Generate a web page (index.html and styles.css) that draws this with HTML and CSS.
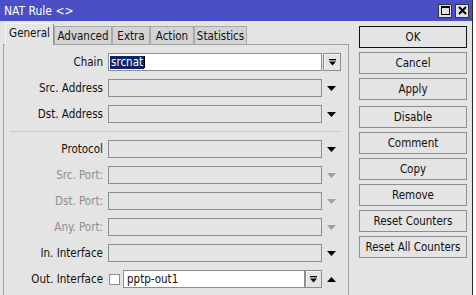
FILE: index.html
```html
<!DOCTYPE html>
<html>
<head>
<meta charset="utf-8">
<link rel="stylesheet" href="styles.css">
</head>
<body>
<div class="screen">
  <div class="window">
    <div class="titlebar">
      <span class="title">NAT Rule &lt;&gt;</span>
      <div class="tb-btns">
        <span class="tb-btn"><svg width="9" height="9" viewBox="0 0 9 9"><rect x="0.5" y="0.5" width="8" height="8" fill="none" stroke="#000" stroke-width="1"/><rect x="0" y="0" width="9" height="2" fill="#000"/></svg></span>
        <span class="tb-btn"><svg width="9" height="9" viewBox="0 0 9 9"><path d="M1 1 L8 8 M8 1 L1 8" stroke="#000" stroke-width="2"/></svg></span>
      </div>
    </div>
    <div class="body">
      <div class="left">
        <div class="tabs">
          <span class="tab active t-general">General</span>
          <span class="tab t-adv">Advanced</span>
          <span class="tab t-extra">Extra</span>
          <span class="tab t-action">Action</span>
          <span class="tab t-stats">Statistics</span>
        </div>
        <div class="panel">
          <div class="row">
            <span class="label">Chain</span>
            <span class="field input"><span class="sel">srcnat</span><span class="caret"></span></span>
            <span class="ddbtn"><svg width="7" height="7" viewBox="0 0 7 7"><rect x="0" y="0" width="7" height="1.3" fill="#000"/><polygon points="0,2.5 7,2.5 3.5,6.5" fill="#000"/></svg></span>
          </div>
          <div class="row">
            <span class="label">Src. Address</span>
            <span class="field"></span>
            <span class="arrow"><svg width="9" height="5" viewBox="0 0 9 5"><polygon points="0,0 9,0 4.5,5" fill="#000"/></svg></span>
          </div>
          <div class="row">
            <span class="label">Dst. Address</span>
            <span class="field"></span>
            <span class="arrow"><svg width="9" height="5" viewBox="0 0 9 5"><polygon points="0,0 9,0 4.5,5" fill="#000"/></svg></span>
          </div>
          <div class="sep"></div>
          <div class="row">
            <span class="label">Protocol</span>
            <span class="field"></span>
            <span class="arrow"><svg width="9" height="5" viewBox="0 0 9 5"><polygon points="0,0 9,0 4.5,5" fill="#000"/></svg></span>
          </div>
          <div class="row">
            <span class="label dis">Src. Port:</span>
            <span class="field"></span>
            <span class="arrow"><svg width="9" height="5" viewBox="0 0 9 5"><polygon points="0,0 9,0 4.5,5" fill="#a0a0a0"/></svg></span>
          </div>
          <div class="row">
            <span class="label dis">Dst. Port:</span>
            <span class="field"></span>
            <span class="arrow"><svg width="9" height="5" viewBox="0 0 9 5"><polygon points="0,0 9,0 4.5,5" fill="#a0a0a0"/></svg></span>
          </div>
          <div class="row">
            <span class="label dis">Any. Port:</span>
            <span class="field"></span>
            <span class="arrow"><svg width="9" height="5" viewBox="0 0 9 5"><polygon points="0,0 9,0 4.5,5" fill="#a0a0a0"/></svg></span>
          </div>
          <div class="row">
            <span class="label">In. Interface</span>
            <span class="field"></span>
            <span class="arrow"><svg width="9" height="5" viewBox="0 0 9 5"><polygon points="0,0 9,0 4.5,5" fill="#000"/></svg></span>
          </div>
          <div class="row">
            <span class="label">Out. Interface</span>
            <span class="combo">
              <span class="check"></span>
              <span class="cinput">pptp-out1</span>
              <span class="ddbtn small"><svg width="7" height="7" viewBox="0 0 7 7"><rect x="0" y="0" width="7" height="1.3" fill="#000"/><polygon points="0,2.5 7,2.5 3.5,6.5" fill="#000"/></svg></span>
            </span>
            <span class="arrow"><svg width="9" height="5" viewBox="0 0 9 5"><polygon points="0,5 9,5 4.5,0" fill="#000"/></svg></span>
          </div>
        </div>
      </div>
      <div class="right">
        <div class="btn default">OK</div>
        <div class="btn">Cancel</div>
        <div class="btn">Apply</div>
        <div class="btn gap">Disable</div>
        <div class="btn">Comment</div>
        <div class="btn">Copy</div>
        <div class="btn">Remove</div>
        <div class="btn">Reset Counters</div>
        <div class="btn">Reset All Counters</div>
      </div>
    </div>
  </div>
  <div class="behind"></div>
</div>
</body>
</html>
```
FILE: styles.css
```css
html, body {
  margin: 0;
  padding: 0;
  height: 100%;
  overflow: hidden;
}
body {
  background: #ffffff;
  font-family: "DejaVu Sans Condensed", "DejaVu Sans", sans-serif;
  font-stretch: condensed;
  font-size: 11.5px;
  color: #111;
}
.screen {
  display: flex;
  height: 295px;
}
.window {
  width: 472px;
  border-right: 1px solid #2b2b2b;
  background: #e4e4e4;
  display: flex;
  flex-direction: column;
}
.titlebar {
  height: 21px;
  background: #4b4fc6;
  color: #fff;
  display: flex;
  align-items: center;
  padding: 0 3px 0 4px;
  flex: none;
}
.title {
  flex: 1;
  font-size: 12px;
  padding-top: 1px;
}
.tb-btns {
  display: flex;
  gap: 3px;
}
.tb-btn {
  width: 14px;
  height: 14px;
  box-sizing: border-box;
  border: 1px solid #333;
  background: #e2e2e2;
  display: flex;
  align-items: center;
  justify-content: center;
}
.body {
  flex: 1;
  display: flex;
  padding-left: 3px;
  min-height: 0;
}
.left {
  width: 346px;
  display: flex;
  flex-direction: column;
}
.tabs {
  height: 23px;
  display: flex;
  align-items: flex-end;
  padding-left: 2px;
  flex: none;
}
.tab {
  height: 18px;
  box-sizing: border-box;
  padding: 0 3px;
  border: 1px solid #a9a9a9;
  border-bottom: none;
  background: #d3d3d3;
  display: flex;
  align-items: center;
  justify-content: center;
  flex: none;
}
.t-general { width: 49px; }
.t-adv { width: 58px; }
.t-extra { width: 38px; }
.t-action { width: 44px; }
.t-stats { width: 53px; }
.tab.active {
  height: 22px;
  margin-bottom: -1px;
  background: #e4e4e4;
  border-top-color: #f6f6f6;
  border-left-color: #f6f6f6;
  border-right-color: #8f8f8f;
  position: relative;
  z-index: 1;
  padding-bottom: 3px;
}
.panel {
  flex: 1;
  border: 1px solid #a3a3a3;
  border-bottom: none;
  padding-top: 8px;
}
.row {
  display: flex;
  align-items: center;
  height: 18px;
  margin-bottom: 8px;
}
.label {
  width: 99px;
  margin-right: 5px;
  text-align: right;
  white-space: nowrap;
}
.label.dis {
  color: #8e8e8e;
}
.field {
  width: 214px;
  height: 18px;
  box-sizing: border-box;
  border: 1px solid #8e8e8e;
  background: #e4e4e4;
  flex: none;
}
.field.input {
  background: #fff;
  display: flex;
  align-items: center;
  padding-left: 1px;
}
.sel {
  background: #0a246a;
  color: #fff;
  line-height: 13px;
  padding: 0 1px;
}
.caret {
  width: 1px;
  height: 12px;
  background: #000;
}
.ddbtn {
  width: 18px;
  height: 18px;
  box-sizing: border-box;
  margin-left: 1px;
  border: 1px solid #8e8e8e;
  box-shadow: inset 1px 1px 0 #f4f4f4;
  background: #e4e4e4;
  display: flex;
  align-items: center;
  justify-content: center;
  flex: none;
}
.ddbtn.small {
  width: 17px;
  margin-left: 0;
}
.arrow {
  width: 26px;
  padding-left: 5px;
  box-sizing: border-box;
  display: flex;
  align-items: center;
}
.sep {
  height: 1px;
  background: #c6c6c6;
  margin: 1px 7px 8px 6px;
}
.combo {
  width: 214px;
  height: 18px;
  display: flex;
  align-items: center;
  flex: none;
}
.check {
  width: 11px;
  height: 11px;
  box-sizing: border-box;
  border: 1px solid #8e8e8e;
  background: #fff;
  margin-left: 1px;
  margin-right: 3px;
  flex: none;
}
.cinput {
  width: 182px;
  height: 18px;
  box-sizing: border-box;
  border: 1px solid #8e8e8e;
  background: #fff;
  display: flex;
  align-items: center;
  padding-left: 3px;
  flex: none;
}
.right {
  width: 108px;
  margin-left: 10px;
  padding-top: 5px;
}
.btn {
  height: 22px;
  box-sizing: border-box;
  border: 1px solid #8e8e8e;
  background: #e4e4e4;
  display: flex;
  align-items: center;
  justify-content: center;
  margin-bottom: 4px;
  white-space: nowrap;
}
.btn.default {
  border-color: #111;
}
.btn.gap {
  margin-top: 6px;
}
.behind {
  flex: 1;
  background: #ffffff;
}
```
